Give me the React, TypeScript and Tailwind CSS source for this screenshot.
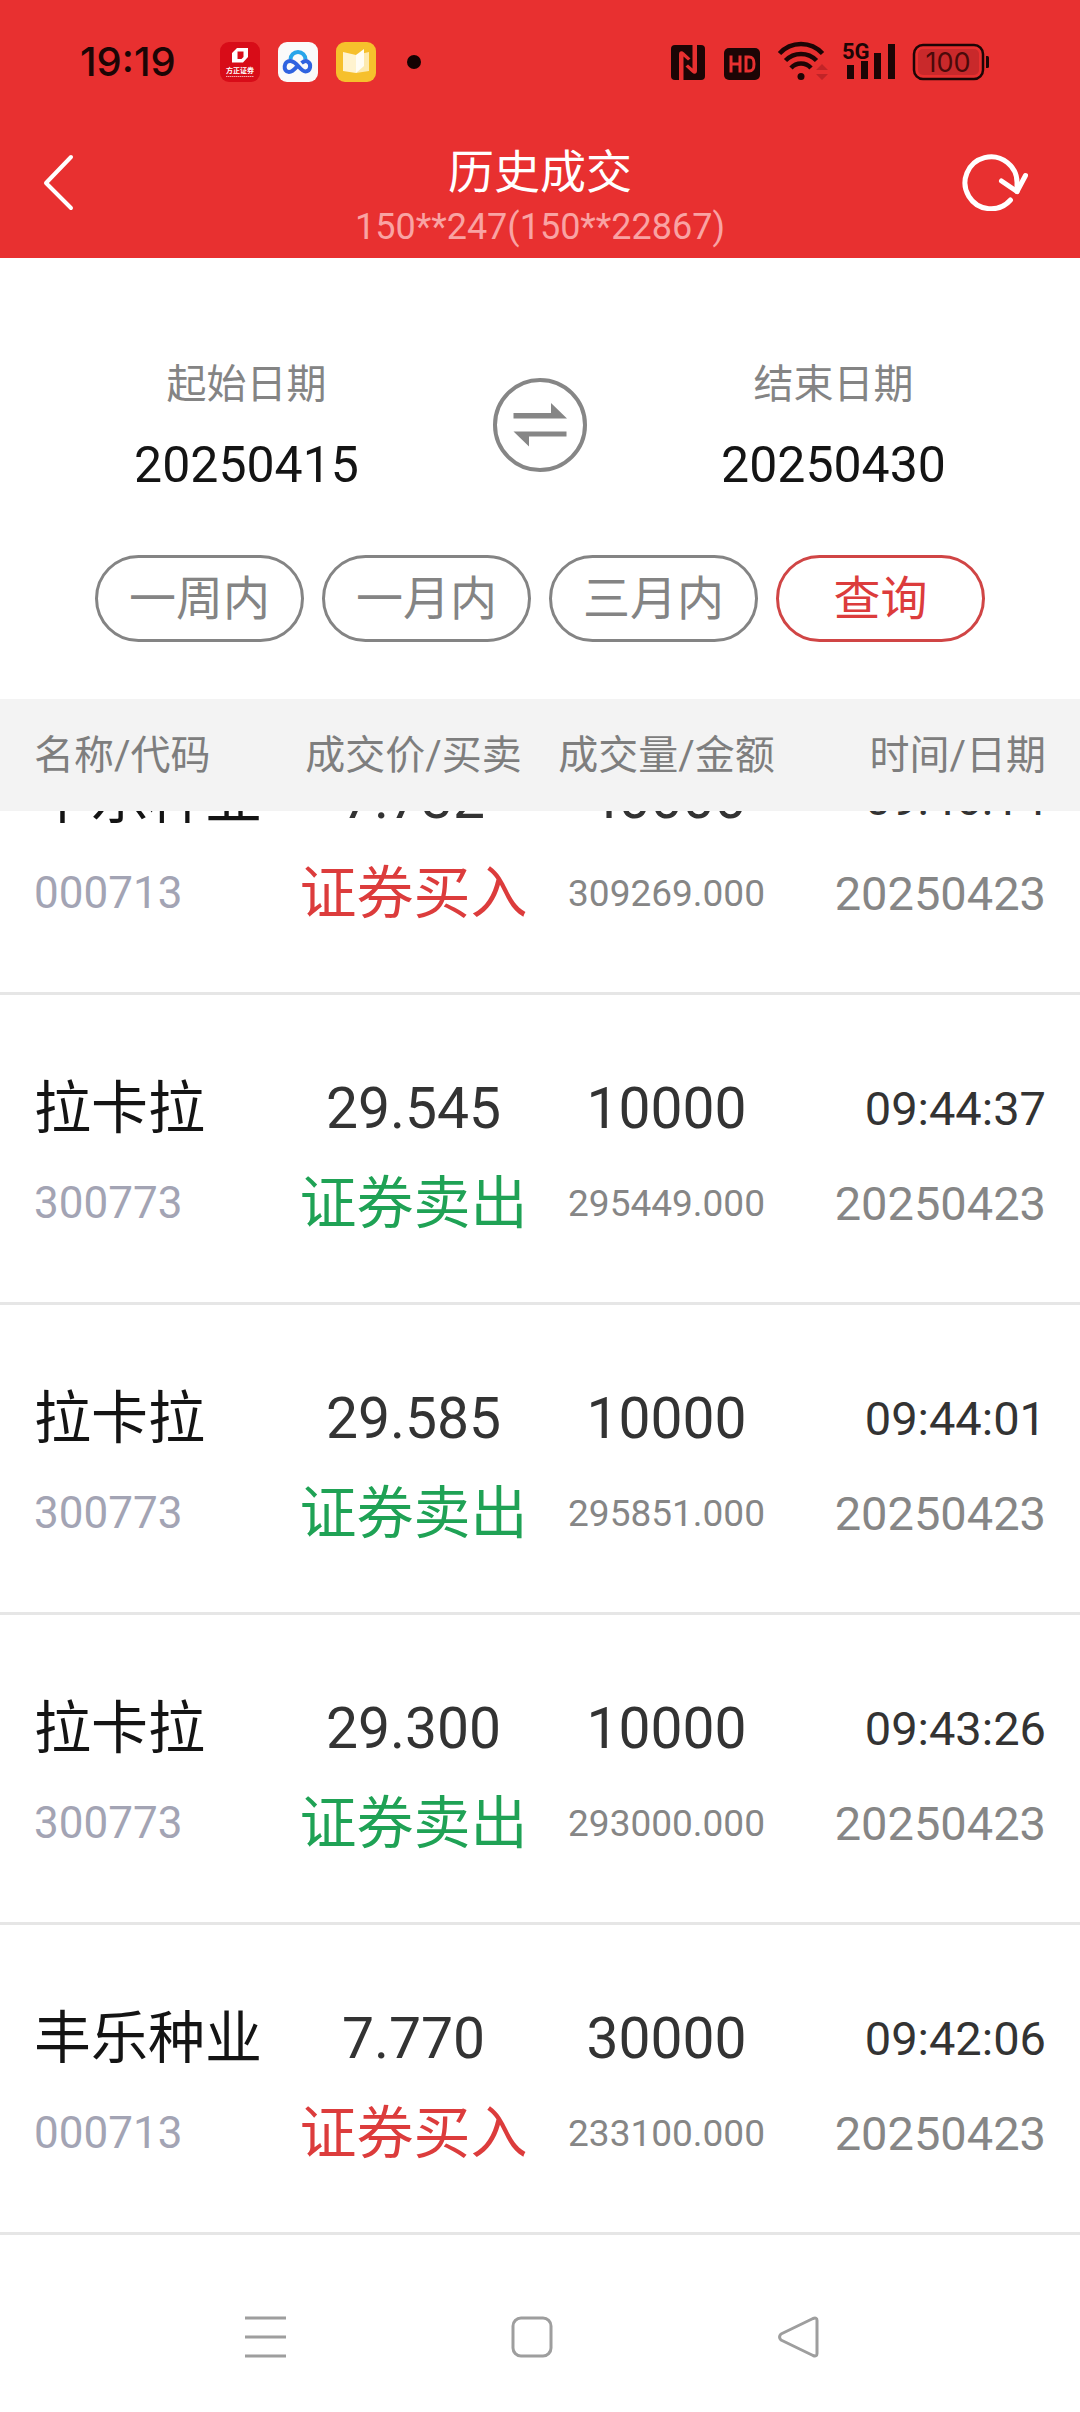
import { useLayoutEffect, useRef, useState } from 'react'
import { clsx } from 'clsx'

interface Trade {
  name: string
  code: string
  price: string
  side: 'buy' | 'sell'
  volume: string
  amount: string
  time: string
  date: string
}

const TRADES: Trade[] = [
  { name: '丰乐种业', code: '000713', price: '7.732',  side: 'buy',  volume: '40000', amount: '309269.000', time: '09:46:14', date: '20250423' },
  { name: '拉卡拉',   code: '300773', price: '29.545', side: 'sell', volume: '10000', amount: '295449.000', time: '09:44:37', date: '20250423' },
  { name: '拉卡拉',   code: '300773', price: '29.585', side: 'sell', volume: '10000', amount: '295851.000', time: '09:44:01', date: '20250423' },
  { name: '拉卡拉',   code: '300773', price: '29.300', side: 'sell', volume: '10000', amount: '293000.000', time: '09:43:26', date: '20250423' },
  { name: '丰乐种业', code: '000713', price: '7.770',  side: 'buy',  volume: '30000', amount: '233100.000', time: '09:42:06', date: '20250423' },
]

const RANGES = ['一周内', '一月内', '三月内']

// how far the list is scrolled when the page opens
const INITIAL_SCROLL = 126

function StatusBar() {
  return (
    <div className="flex h-[124px] items-center justify-between pl-20 pr-[91px] text-[#1c0505]">
      <div className="flex items-center">
        <span className="w-[140px] font-['Inter',sans-serif] text-[40px] font-medium leading-none">19:19</span>
        <div className="flex items-center gap-[18px]">
          <svg className="size-10" viewBox="0 0 40 40">
            <rect width="40" height="40" rx="9" fill="#d80c18" />
            <path d="M17 6h11v9l-5 5.500H12V11z M17.500 9.500v7.500h4l2-2V9.500z" fill="#fff" fillRule="evenodd" />
            <text x="20" y="31" textAnchor="middle" fontSize="7" fontWeight="700" fill="#fff" fontFamily="Noto Sans CJK SC">方正证券</text>
            <path d="M6 34.500h28" stroke="#f3a5a8" strokeDasharray="1.500 0.500" />
          </svg>
          <svg className="size-10" viewBox="0 0 40 40" fill="none">
            <rect width="40" height="40" rx="9" fill="#fafafa" />
            <path d="M12.500 17.500a7.500 7.500 0 0 1 15 0" stroke="#28a5ea" strokeWidth="4" />
            <path d="M23.500 21c2.500-2 4.500-2.500 6-1.500 4.500 2.500 3 10-2 10-5.500 0-8-10-15-10.500-7-.3-8 10.500-1.500 11 3 0 5.500-2.500 8-5.500" stroke="#2f63e0" strokeWidth="4" />
          </svg>
          <svg className="size-10" viewBox="0 0 40 40">
            <rect width="40" height="40" rx="9" fill="#f6c02c" />
            <path d="M7 10l13 3v18l-13-2z" fill="#fff3cf" />
            <path d="M20 13l13-3v19l-13 2z" fill="#fdeab0" />
            <path d="M20 13l8-6v17l-8 7z" fill="#fffdf5" />
          </svg>
        </div>
        <span className="ml-[31px] size-3.5 rounded-full bg-[#140202]" />
      </div>

      <svg className="h-[50px] w-[318px]" viewBox="0 -4 318 50" fill="currentColor">
        {/* nfc */}
        <rect x="0" y="4" width="34" height="35" rx="4" />
        <path d="M8 39V13.500c0-4 3-4 5-2l6.500 6-2.500 2-4.500-4V39z" fill="#e83030" />
        <path d="M26 4v25.500c0 4-3 4-5 2l-6.500-6 2.500-2 4.500 4V4z" fill="#e83030" />
        {/* hd */}
        <rect x="53" y="7" width="36" height="32" rx="5" />
        <path d="M60 14.500v17M69 14.500v17M60 23h9M75 16v14h3c4 0 5-2 5-7s-1-7-5-7z" fill="none" stroke="#e83030" strokeWidth="3" />
        {/* wifi */}
        <g fill="none" stroke="currentColor" strokeWidth="4.500">
          <path d="M108.500 12.500a29 29 0 0 1 43 0" />
          <path d="M114.500 19.500a21.500 21.500 0 0 1 31 0" />
          <path d="M120 27a13.500 13.500 0 0 1 20 0" />
        </g>
        <circle cx="130" cy="35.500" r="3.500" />
        <path d="M145 29l6-6 6 6zM145 33l6 6 6-6z" fill="#c12427" />
        {/* signal */}
        <text x="171" y="18" fontSize="22" fontWeight="700" fontFamily="Roboto">5G</text>
        <path d="M176 24h7v14h-7zM190 20h7v18h-7zM203 12h7v26h-7zM217 3h7v35h-7z" />
        {/* battery */}
        <rect x="243" y="4" width="69" height="34" rx="9" fill="none" stroke="currentColor" strokeWidth="2.500" />
        <rect x="247" y="8" width="61" height="26" rx="5" fill="#c9292b" />
        <path d="M315 15h1.500a1.500 1.500 0 0 1 1.500 1.500v9a1.500 1.500 0 0 1-1.500 1.500H315z" />
        <text x="277" y="31" textAnchor="middle" fontSize="27" fill="#4a0a0a" fontFamily="Inter">100</text>
      </svg>
    </div>
  )
}

function TitleBar() {
  return (
    <div className="flex items-start pb-1.5 text-white">
      <button type="button" aria-label="返回" className="flex h-[116px] w-[120px] items-center pl-[43px]">
        <svg className="h-[58px] w-8" viewBox="0 0 32 58" fill="none" stroke="currentColor" strokeWidth="4" strokeLinecap="round" strokeLinejoin="round">
          <path d="M28 4L3 30l25 25" />
        </svg>
      </button>
      <div className="flex-1 pt-[18px] text-center">
        <h1 className="text-[46px] leading-[60px]">历史成交</h1>
        <p className="text-[36px] leading-[50px] text-[#f9a3a3]">150**247(150**22867)</p>
      </div>
      <button type="button" aria-label="刷新" className="flex h-[116px] w-[120px] items-center justify-end pr-[52px]">
        <svg className="h-[58px] w-[66px]" viewBox="0 0 66 58" fill="none" stroke="currentColor" strokeWidth="5" strokeLinecap="round" strokeLinejoin="round">
          <path d="M48.500 47A26 26 0 1 1 55 31L55 38.500" />
          <path d="M39.500 28L55 38.500L63.500 22.500" />
        </svg>
      </button>
    </div>
  )
}

function DateField({ id, label, value, onChange }: { id: string; label: string; value: string; onChange: (v: string) => void }) {
  return (
    <div className="flex min-w-0 flex-1 flex-col items-center gap-[25px]">
      <label htmlFor={id} className="text-[40px] leading-[56px] text-[#848484]">{label}</label>
      <input
        id={id}
        value={value}
        onChange={e => onChange(e.target.value)}
        className="h-[54px] w-full bg-transparent text-center text-[50px] leading-[54px] text-[#141414] outline-none"
      />
    </div>
  )
}

function Filters() {
  const [start, setStart] = useState('20250415')
  const [end, setEnd] = useState('20250430')

  const swap = () => {
    setStart(end)
    setEnd(start)
  }

  return (
    <section className="pb-[57px] pt-[99px]">
      <div className="flex items-center">
        <DateField id="start" label="起始日期" value={start} onChange={setStart} />
        <button type="button" aria-label="交换日期" onClick={swap} className="size-[94px]">
          <svg className="size-full" viewBox="0 0 94 94" fill="#868686">
            <circle cx="47" cy="47" r="45" fill="none" stroke="#868686" strokeWidth="4" />
            <path d="M20.500 35H58V25L74 40.500H20.500zM73.500 58.500H36V68.500L20.500 53.500h53z" />
          </svg>
        </button>
        <DateField id="end" label="结束日期" value={end} onChange={setEnd} />
      </div>

      <div className="mt-[63px] flex gap-[18px] px-[95px]">
        {RANGES.map(r => (
          <button key={r} type="button" className="h-[87px] flex-1 rounded-full border-3 border-[#848484] text-[47px] leading-none text-[#848484]">
            {r}
          </button>
        ))}
        <button type="button" className="h-[87px] flex-1 rounded-full border-3 border-[#d04545] text-[47px] leading-none text-[#dc3c3c]">
          查询
        </button>
      </div>
    </section>
  )
}

function TradeRow({ trade }: { trade: Trade }) {
  const buy = trade.side === 'buy'
  return (
    <tr className="grid h-[310px] grid-cols-4 whitespace-nowrap border-b-3 border-[#e6e6e6] px-[34px] pt-[66px] text-center text-[57px] leading-[95px] text-[#333]">
      <td className="text-left">
        <div className="text-[#141414]">{trade.name}</div>
        <div className="text-[44px] text-[#a3a4b4]">{trade.code}</div>
      </td>
      <td>
        <div>{trade.price}</div>
        <div className={clsx(buy ? 'text-[#dc3c3c]' : 'text-[#1fa255]')}>{buy ? '证券买入' : '证券卖出'}</div>
      </td>
      <td>
        <div>{trade.volume}</div>
        <div className="text-[37px] text-[#868686]">{trade.amount}</div>
      </td>
      <td className="text-right text-[47px]">
        <div>{trade.time}</div>
        <div className="text-[#868686]">{trade.date}</div>
      </td>
    </tr>
  )
}

function TradeTable() {
  const body = useRef<HTMLTableSectionElement>(null)

  useLayoutEffect(() => {
    if (body.current) body.current.scrollTop = INITIAL_SCROLL
  }, [])

  return (
    <table className="flex min-h-0 flex-1 flex-col">
      <thead className="block bg-[#f3f3f3]">
        <tr className="grid h-28 grid-cols-4 items-center whitespace-nowrap px-[34px] pt-0.5 text-[40px] text-[#7e7e7e] *:font-normal">
          <th className="text-left">名称/代码</th>
          <th>成交价/买卖</th>
          <th>成交量/金额</th>
          <th className="text-right">时间/日期</th>
        </tr>
      </thead>
      <tbody ref={body} className="block min-h-0 flex-1 overflow-y-auto pb-[27px] [scrollbar-width:none]">
        {TRADES.map(t => (
          <TradeRow key={t.time} trade={t} />
        ))}
      </tbody>
    </table>
  )
}

function NavBar() {
  return (
    <nav className="flex h-[150px] shrink-0 items-center justify-center gap-[224px] bg-white pr-4 text-[#9e9e9e]">
      <button type="button" aria-label="最近任务">
        <svg className="size-[42px]" viewBox="0 0 42 42" stroke="currentColor" strokeWidth="3">
          <path d="M0 2h41M0 21h41M0 40h41" />
        </svg>
      </button>
      <button type="button" aria-label="主屏幕">
        <svg className="size-[42px]" viewBox="0 0 42 42" fill="none" stroke="currentColor" strokeWidth="3">
          <rect x="2" y="2" width="38" height="38" rx="8" />
        </svg>
      </button>
      <button type="button" aria-label="返回上一级">
        <svg className="size-[42px]" viewBox="0 0 42 42" fill="none" stroke="currentColor" strokeWidth="3" strokeLinejoin="round">
          <path d="M4 18L36 2.500q4-1.500 4 2v33q0 3.500-4 2L4 24q-3-3 0-6z" />
        </svg>
      </button>
    </nav>
  )
}

export default function App() {
  return (
    <div className="flex h-screen flex-col bg-white font-['Roboto','Noto_Sans_CJK_SC',sans-serif]">
      <header className="shrink-0 bg-[#e83030]">
        <StatusBar />
        <TitleBar />
      </header>
      <Filters />
      <TradeTable />
      <NavBar />
    </div>
  )
}
